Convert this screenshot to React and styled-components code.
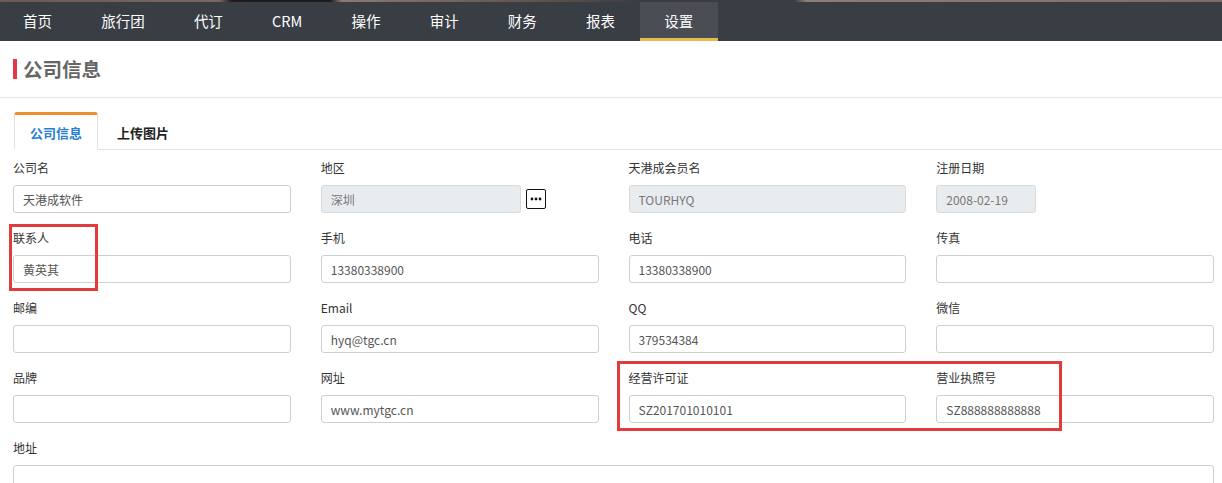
import React from "react";
import styled, { createGlobalStyle } from "styled-components";

const GlobalStyle = createGlobalStyle`
  body {
    margin: 0;
    background: #fff;
    font-family: "Noto Sans CJK SC", "Noto Sans", sans-serif;
    color: #333;
  }
`;

const navItems = ["首页", "旅行团", "代订", "CRM", "操作", "审计", "财务", "报表", "设置"];

// each row of the form; span = full width, w = fixed input width, more = "..." picker
const rows = [
  [
    { label: "公司名", value: "天港成软件" },
    { label: "地区", value: "深圳", disabled: true, w: 200, more: true },
    { label: "天港成会员名", value: "TOURHYQ", disabled: true },
    { label: "注册日期", value: "2008-02-19", disabled: true, w: 100 },
  ],
  [
    { label: "联系人", value: "黄英其" },
    { label: "手机", value: "13380338900" },
    { label: "电话", value: "13380338900" },
    { label: "传真", value: "" },
  ],
  [
    { label: "邮编", value: "" },
    { label: "Email", value: "hyq@tgc.cn" },
    { label: "QQ", value: "379534384" },
    { label: "微信", value: "" },
  ],
  [
    { label: "品牌", value: "" },
    { label: "网址", value: "www.mytgc.cn" },
    { label: "经营许可证", value: "SZ201701010101" },
    { label: "营业执照号", value: "SZ888888888888" },
  ],
  [{ label: "地址", value: "", span: true }],
];

const App = () => {
  return (
    <Page>
      <GlobalStyle />
      <TopStrip />
      <NavBar>
        {navItems.map((item) => (
          <NavItem key={item} active={item === "设置"}>
            {item}
          </NavItem>
        ))}
      </NavBar>
      <Header>
        <Title>公司信息</Title>
      </Header>
      <Tabs>
        <Tab active>公司信息</Tab>
        <Tab>上传图片</Tab>
        <TabRest />
      </Tabs>
      <Form>
        {rows.flat().map((f) => (
          <Field key={f.label} span={f.span}>
            <Label>{f.label}</Label>
            <InputRow>
              <Input
                readOnly
                value={f.value}
                disabled={f.disabled}
                w={f.w}
              />
              {f.more && (
                <MoreButton>
                  <svg width="12" height="4" viewBox="0 0 12 4">
                    <circle cx="2" cy="2" r="1.4" fill="#111" />
                    <circle cx="6" cy="2" r="1.4" fill="#111" />
                    <circle cx="10" cy="2" r="1.4" fill="#111" />
                  </svg>
                </MoreButton>
              )}
            </InputRow>
          </Field>
        ))}
        {/* red annotation frames drawn over the form */}
        <Mark top={74} left={9} width={89} height={67} />
        <Mark top={211} left={617} width={445} height={70} />
      </Form>
    </Page>
  );
};

const Page = styled.div`
  width: 1222px;
  height: 483px;
  overflow: hidden;
`;

const TopStrip = styled.div`
  height: 2px;
  background: linear-gradient(
    to right,
    #6e5a55 0%,
    #7a6660 18%,
    #1c1a1a 19%,
    #1c1a1a 27%,
    #8a7a72 28%,
    #5a4e4a 46%,
    #3b3d43 52%,
    #3b3d43 65%,
    #8e7e7a 66%,
    #7c6d68 100%
  );
`;

const NavBar = styled.div`
  display: flex;
  height: 39px;
  background: #393d44;
`;

const NavItem = styled.div`
  display: flex;
  align-items: center;
  padding: 1px 24.6px 0;
  font-size: 14.5px;
  color: #fff;
  box-sizing: border-box;
  background: ${(p) => (p.active ? "#4a4d53" : "transparent")};
  border-bottom: 3px solid ${(p) => (p.active ? "#e8bc4a" : "transparent")};
  &:first-child {
    padding-left: 23px;
  }
`;

const Header = styled.div`
  height: 56px;
  display: flex;
  align-items: center;
  padding-left: 13px;
  border-bottom: 1px solid #e6e6e6;
`;

const Title = styled.h1`
  margin: 0;
  font-size: 19.5px;
  font-weight: bold;
  color: #666;
  border-left: 4px solid #e03a48;
  padding-left: 6px;
  line-height: 20px;
`;

const Tabs = styled.div`
  display: flex;
  align-items: flex-end;
  margin-top: 14px;
  padding-left: 14px;
`;

const Tab = styled.div`
  height: 38px;
  box-sizing: border-box;
  display: flex;
  align-items: center;
  padding: 0 ${(p) => (p.active ? "15px" : "18px")};
  font-size: 13px;
  font-weight: bold;
  color: ${(p) => (p.active ? "#2a7fd4" : "#222")};
  border: 1px solid ${(p) => (p.active ? "#e2e2e2" : "transparent")};
  border-top: 3px solid ${(p) => (p.active ? "#f08d2e" : "transparent")};
  border-bottom: 1px solid ${(p) => (p.active ? "#fff" : "#e2e2e2")};
  border-radius: 3px 3px 0 0;
  background: #fff;
`;

const TabRest = styled.div`
  flex: 1;
  border-bottom: 1px solid #e2e2e2;
`;

const Form = styled.div`
  position: relative;
  display: grid;
  grid-template-columns: repeat(4, 1fr);
  column-gap: 30px;
  padding: 9px 8px 0 13px;
`;

const Field = styled.div`
  grid-column: ${(p) => (p.span ? "1 / -1" : "auto")};
  margin-bottom: 16px;
`;

const Label = styled.div`
  font-size: 12px;
  line-height: 18px;
  color: #333;
  margin-bottom: 8px;
`;

const InputRow = styled.div`
  display: flex;
  align-items: center;
`;

const Input = styled.input`
  width: ${(p) => (p.w ? `${p.w}px` : "100%")};
  height: 28px;
  box-sizing: border-box;
  border: 1px solid #cfcfcf;
  border-radius: 3px;
  padding: 0 9px;
  font-family: "Noto Sans CJK SC", "Noto Sans", sans-serif;
  font-size: 12px;
  color: #555;
  background: #fff;
  outline: none;
  &:disabled {
    background: #e9ecef;
    color: #777;
    border-color: #d8dbde;
  }
`;

const MoreButton = styled.div`
  width: 20px;
  height: 20px;
  box-sizing: border-box;
  margin-left: 5px;
  border: 1.5px solid #111;
  border-radius: 2px;
  display: flex;
  align-items: center;
  justify-content: center;
  background: #fff;
`;

const Mark = styled.div`
  position: absolute;
  top: ${(p) => p.top}px;
  left: ${(p) => p.left}px;
  width: ${(p) => p.width}px;
  height: ${(p) => p.height}px;
  box-sizing: border-box;
  border: 3px solid #e23b3b;
  pointer-events: none;
`;

export default App;
